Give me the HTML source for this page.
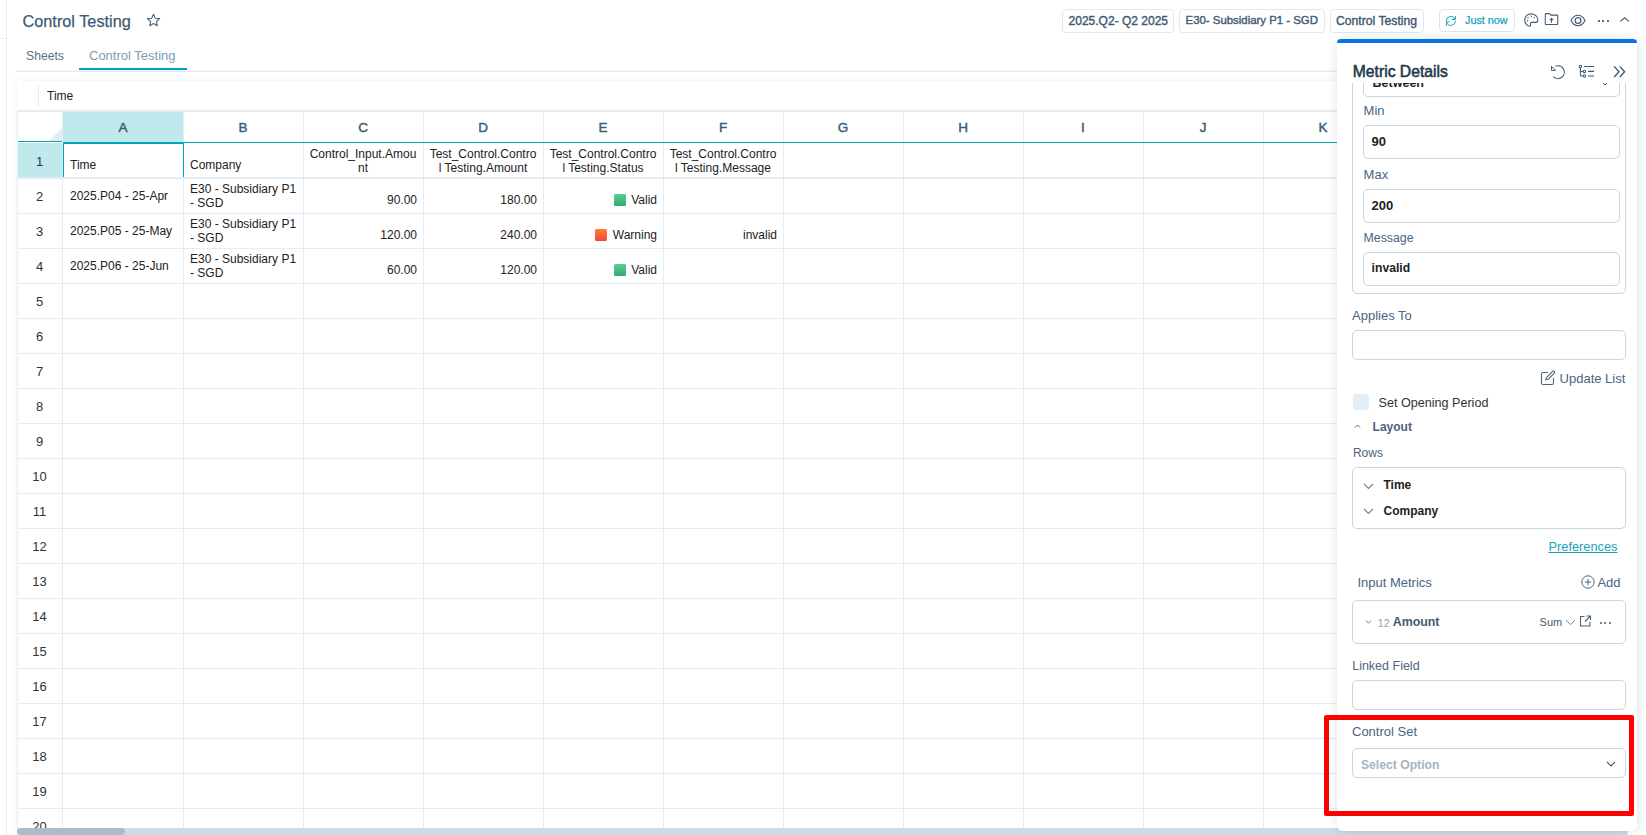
<!DOCTYPE html>
<html><head><meta charset="utf-8"><style>
html,body{margin:0;padding:0}
body{width:1646px;height:835px;overflow:hidden;position:relative;background:#fff;font-family:"Liberation Sans",sans-serif}
.t{position:absolute;line-height:1;white-space:nowrap}
.r{position:absolute}
</style></head><body>
<div class="r" style="left:6px;top:0px;width:1px;height:835px;background:#e6eef6"></div>
<div class="r" style="left:0px;top:38px;width:6px;height:1px;background:#e6eef6"></div>
<div class="t" style="left:22.5px;top:13.20px;font-size:16.3px;font-weight:400;color:#3f5b74;-webkit-text-stroke:0.25px #3f5b74">Control Testing</div>
<svg class="r" style="left:146px;top:13px" width="15" height="15" viewBox="0 0 15 15"><path d="M7.5 1.2 L9.3 5.2 L13.6 5.6 L10.4 8.5 L11.3 12.8 L7.5 10.6 L3.7 12.8 L4.6 8.5 L1.4 5.6 L5.7 5.2 Z" fill="none" stroke="#4a6580" stroke-width="1.1" stroke-linejoin="round"/></svg>
<div class="t" style="left:26px;top:49.67px;font-size:12.2px;font-weight:400;color:#58728a;">Sheets</div>
<div class="t" style="left:89px;top:49.00px;font-size:13px;font-weight:400;color:#7f9cb4;">Control Testing</div>
<div class="r" style="left:16px;top:70px;width:1330px;height:1px;background:#f1f5f9"></div>
<div class="r" style="left:16px;top:71px;width:1330px;height:1px;background:#e2ebf4"></div>
<div class="r" style="left:79px;top:68px;width:108px;height:2px;background:#00a6b8"></div>
<div class="r" style="left:17px;top:81px;width:1400px;height:760px;background:#fff;box-shadow:0 0 8px rgba(40,60,90,0.07)"></div>
<div class="r" style="left:38px;top:85px;width:1px;height:21px;background:#e4ebf2"></div>
<div class="t" style="left:47px;top:89.84px;font-size:12px;font-weight:400;color:#222;">Time</div>
<div class="r" style="left:17px;top:110px;width:1400px;height:2px;background:#e4edf4"></div>
<svg class="r" style="left:49px;top:128px" width="13" height="13"><path d="M13 0 L13 13 L0 13 Z" fill="#e4ebf2"/></svg>
<div class="r" style="left:17px;top:141px;width:45px;height:1px;background:#00a6b8"></div>
<div class="r" style="left:62px;top:112px;width:1px;height:723px;background:#e4edf4"></div>
<div class="r" style="left:63px;top:112px;width:120px;height:30px;background:#bfe9ed"></div>
<div class="t" style="left:23px;width:200px;text-align:center;top:120.57px;font-size:13.5px;font-weight:400;color:#3f5b74;-webkit-text-stroke:0.45px #3f5b74">A</div>
<div class="r" style="left:183px;top:112px;width:1px;height:723px;background:#e4edf4"></div>
<div class="t" style="left:143px;width:200px;text-align:center;top:120.57px;font-size:13.5px;font-weight:400;color:#3f5b74;-webkit-text-stroke:0.45px #3f5b74">B</div>
<div class="r" style="left:303px;top:112px;width:1px;height:723px;background:#e4edf4"></div>
<div class="t" style="left:263px;width:200px;text-align:center;top:120.57px;font-size:13.5px;font-weight:400;color:#3f5b74;-webkit-text-stroke:0.45px #3f5b74">C</div>
<div class="r" style="left:423px;top:112px;width:1px;height:723px;background:#e4edf4"></div>
<div class="t" style="left:383px;width:200px;text-align:center;top:120.57px;font-size:13.5px;font-weight:400;color:#3f5b74;-webkit-text-stroke:0.45px #3f5b74">D</div>
<div class="r" style="left:543px;top:112px;width:1px;height:723px;background:#e4edf4"></div>
<div class="t" style="left:503px;width:200px;text-align:center;top:120.57px;font-size:13.5px;font-weight:400;color:#3f5b74;-webkit-text-stroke:0.45px #3f5b74">E</div>
<div class="r" style="left:663px;top:112px;width:1px;height:723px;background:#e4edf4"></div>
<div class="t" style="left:623px;width:200px;text-align:center;top:120.57px;font-size:13.5px;font-weight:400;color:#3f5b74;-webkit-text-stroke:0.45px #3f5b74">F</div>
<div class="r" style="left:783px;top:112px;width:1px;height:723px;background:#e4edf4"></div>
<div class="t" style="left:743px;width:200px;text-align:center;top:120.57px;font-size:13.5px;font-weight:400;color:#3f5b74;-webkit-text-stroke:0.45px #3f5b74">G</div>
<div class="r" style="left:903px;top:112px;width:1px;height:723px;background:#e4edf4"></div>
<div class="t" style="left:863px;width:200px;text-align:center;top:120.57px;font-size:13.5px;font-weight:400;color:#3f5b74;-webkit-text-stroke:0.45px #3f5b74">H</div>
<div class="r" style="left:1023px;top:112px;width:1px;height:723px;background:#e4edf4"></div>
<div class="t" style="left:983px;width:200px;text-align:center;top:120.57px;font-size:13.5px;font-weight:400;color:#3f5b74;-webkit-text-stroke:0.45px #3f5b74">I</div>
<div class="r" style="left:1143px;top:112px;width:1px;height:723px;background:#e4edf4"></div>
<div class="t" style="left:1103px;width:200px;text-align:center;top:120.57px;font-size:13.5px;font-weight:400;color:#3f5b74;-webkit-text-stroke:0.45px #3f5b74">J</div>
<div class="r" style="left:1263px;top:112px;width:1px;height:723px;background:#e4edf4"></div>
<div class="t" style="left:1223px;width:200px;text-align:center;top:120.57px;font-size:13.5px;font-weight:400;color:#3f5b74;-webkit-text-stroke:0.45px #3f5b74">K</div>
<div class="r" style="left:63px;top:142px;width:1400px;height:1px;background:#00a6b8"></div>
<div class="r" style="left:18px;top:143px;width:44px;height:34px;background:#bfe9ed"></div>
<div class="r" style="left:17px;top:112px;width:1px;height:723px;background:#e4edf4"></div>
<div class="r" style="left:17px;top:177px;width:1400px;height:2px;background:#e4edf4"></div>
<div class="t" style="left:-60.5px;width:200px;text-align:center;top:155.00px;font-size:13px;font-weight:400;color:#333;">1</div>
<div class="r" style="left:17px;top:213px;width:1400px;height:1px;background:#e4edf4"></div>
<div class="t" style="left:-60.5px;width:200px;text-align:center;top:189.50px;font-size:13px;font-weight:400;color:#333;">2</div>
<div class="r" style="left:17px;top:248px;width:1400px;height:1px;background:#e4edf4"></div>
<div class="t" style="left:-60.5px;width:200px;text-align:center;top:224.50px;font-size:13px;font-weight:400;color:#333;">3</div>
<div class="r" style="left:17px;top:283px;width:1400px;height:1px;background:#e4edf4"></div>
<div class="t" style="left:-60.5px;width:200px;text-align:center;top:259.50px;font-size:13px;font-weight:400;color:#333;">4</div>
<div class="r" style="left:17px;top:318px;width:1400px;height:1px;background:#e4edf4"></div>
<div class="t" style="left:-60.5px;width:200px;text-align:center;top:294.50px;font-size:13px;font-weight:400;color:#333;">5</div>
<div class="r" style="left:17px;top:353px;width:1400px;height:1px;background:#e4edf4"></div>
<div class="t" style="left:-60.5px;width:200px;text-align:center;top:329.50px;font-size:13px;font-weight:400;color:#333;">6</div>
<div class="r" style="left:17px;top:388px;width:1400px;height:1px;background:#e4edf4"></div>
<div class="t" style="left:-60.5px;width:200px;text-align:center;top:364.50px;font-size:13px;font-weight:400;color:#333;">7</div>
<div class="r" style="left:17px;top:423px;width:1400px;height:1px;background:#e4edf4"></div>
<div class="t" style="left:-60.5px;width:200px;text-align:center;top:399.50px;font-size:13px;font-weight:400;color:#333;">8</div>
<div class="r" style="left:17px;top:458px;width:1400px;height:1px;background:#e4edf4"></div>
<div class="t" style="left:-60.5px;width:200px;text-align:center;top:434.50px;font-size:13px;font-weight:400;color:#333;">9</div>
<div class="r" style="left:17px;top:493px;width:1400px;height:1px;background:#e4edf4"></div>
<div class="t" style="left:-60.5px;width:200px;text-align:center;top:469.50px;font-size:13px;font-weight:400;color:#333;">10</div>
<div class="r" style="left:17px;top:528px;width:1400px;height:1px;background:#e4edf4"></div>
<div class="t" style="left:-60.5px;width:200px;text-align:center;top:504.50px;font-size:13px;font-weight:400;color:#333;">11</div>
<div class="r" style="left:17px;top:563px;width:1400px;height:1px;background:#e4edf4"></div>
<div class="t" style="left:-60.5px;width:200px;text-align:center;top:539.50px;font-size:13px;font-weight:400;color:#333;">12</div>
<div class="r" style="left:17px;top:598px;width:1400px;height:1px;background:#e4edf4"></div>
<div class="t" style="left:-60.5px;width:200px;text-align:center;top:574.50px;font-size:13px;font-weight:400;color:#333;">13</div>
<div class="r" style="left:17px;top:633px;width:1400px;height:1px;background:#e4edf4"></div>
<div class="t" style="left:-60.5px;width:200px;text-align:center;top:609.50px;font-size:13px;font-weight:400;color:#333;">14</div>
<div class="r" style="left:17px;top:668px;width:1400px;height:1px;background:#e4edf4"></div>
<div class="t" style="left:-60.5px;width:200px;text-align:center;top:644.50px;font-size:13px;font-weight:400;color:#333;">15</div>
<div class="r" style="left:17px;top:703px;width:1400px;height:1px;background:#e4edf4"></div>
<div class="t" style="left:-60.5px;width:200px;text-align:center;top:679.50px;font-size:13px;font-weight:400;color:#333;">16</div>
<div class="r" style="left:17px;top:738px;width:1400px;height:1px;background:#e4edf4"></div>
<div class="t" style="left:-60.5px;width:200px;text-align:center;top:714.50px;font-size:13px;font-weight:400;color:#333;">17</div>
<div class="r" style="left:17px;top:773px;width:1400px;height:1px;background:#e4edf4"></div>
<div class="t" style="left:-60.5px;width:200px;text-align:center;top:749.50px;font-size:13px;font-weight:400;color:#333;">18</div>
<div class="r" style="left:17px;top:808px;width:1400px;height:1px;background:#e4edf4"></div>
<div class="t" style="left:-60.5px;width:200px;text-align:center;top:784.50px;font-size:13px;font-weight:400;color:#333;">19</div>
<div class="r" style="left:17px;top:843px;width:1400px;height:1px;background:#e4edf4"></div>
<div class="t" style="left:-60.5px;width:200px;text-align:center;top:819.50px;font-size:13px;font-weight:400;color:#333;">20</div>
<div class="r" style="left:63px;top:142px;width:121px;height:2px;background:#00a6b8"></div>
<div class="r" style="left:63px;top:142px;width:1px;height:35px;background:#00a6b8"></div>
<div class="r" style="left:183px;top:142px;width:1px;height:35px;background:#00a6b8"></div>
<div class="t" style="left:70px;top:158.54px;font-size:12px;font-weight:400;color:#222;">Time</div>
<div class="t" style="left:190px;top:158.54px;font-size:12px;font-weight:400;color:#222;">Company</div>
<div class="t" style="left:263px;width:200px;text-align:center;top:148.04px;font-size:12px;font-weight:400;color:#222;">Control_Input.Amou</div>
<div class="t" style="left:263px;width:200px;text-align:center;top:162.04px;font-size:12px;font-weight:400;color:#222;">nt</div>
<div class="t" style="left:383px;width:200px;text-align:center;top:148.04px;font-size:12px;font-weight:400;color:#222;">Test_Control.Contro</div>
<div class="t" style="left:383px;width:200px;text-align:center;top:162.04px;font-size:12px;font-weight:400;color:#222;">l Testing.Amount</div>
<div class="t" style="left:503px;width:200px;text-align:center;top:148.04px;font-size:12px;font-weight:400;color:#222;">Test_Control.Contro</div>
<div class="t" style="left:503px;width:200px;text-align:center;top:162.04px;font-size:12px;font-weight:400;color:#222;">l Testing.Status</div>
<div class="t" style="left:623px;width:200px;text-align:center;top:148.04px;font-size:12px;font-weight:400;color:#222;">Test_Control.Contro</div>
<div class="t" style="left:623px;width:200px;text-align:center;top:162.04px;font-size:12px;font-weight:400;color:#222;">l Testing.Message</div>
<div class="t" style="left:70px;top:189.74px;font-size:12px;font-weight:400;color:#222;">2025.P04 - 25-Apr</div>
<div class="t" style="left:190px;top:182.94px;font-size:12px;font-weight:400;color:#222;">E30 - Subsidiary P1</div>
<div class="t" style="left:190px;top:196.94px;font-size:12px;font-weight:400;color:#222;">- SGD</div>
<div class="t" style="right:1229px;top:193.84px;font-size:12px;font-weight:400;color:#222;">90.00</div>
<div class="t" style="right:1109px;top:193.84px;font-size:12px;font-weight:400;color:#222;">180.00</div>
<div class="t" style="right:989px;top:193.84px;font-size:12px;font-weight:400;color:#222;">Valid</div>
<div class="r" style="left:614px;top:194px;width:12px;height:12px;background:linear-gradient(#52d192,#38a673);border-radius:1.5px"></div>
<div class="t" style="left:70px;top:224.74px;font-size:12px;font-weight:400;color:#222;">2025.P05 - 25-May</div>
<div class="t" style="left:190px;top:217.94px;font-size:12px;font-weight:400;color:#222;">E30 - Subsidiary P1</div>
<div class="t" style="left:190px;top:231.94px;font-size:12px;font-weight:400;color:#222;">- SGD</div>
<div class="t" style="right:1229px;top:228.84px;font-size:12px;font-weight:400;color:#222;">120.00</div>
<div class="t" style="right:1109px;top:228.84px;font-size:12px;font-weight:400;color:#222;">240.00</div>
<div class="t" style="right:989px;top:228.84px;font-size:12px;font-weight:400;color:#222;">Warning</div>
<div class="r" style="left:595px;top:229px;width:12px;height:12px;background:linear-gradient(#ff7d33,#ee4a3c);border-radius:1.5px"></div>
<div class="t" style="right:869px;top:228.84px;font-size:12px;font-weight:400;color:#222;">invalid</div>
<div class="t" style="left:70px;top:259.74px;font-size:12px;font-weight:400;color:#222;">2025.P06 - 25-Jun</div>
<div class="t" style="left:190px;top:252.94px;font-size:12px;font-weight:400;color:#222;">E30 - Subsidiary P1</div>
<div class="t" style="left:190px;top:266.94px;font-size:12px;font-weight:400;color:#222;">- SGD</div>
<div class="t" style="right:1229px;top:263.84px;font-size:12px;font-weight:400;color:#222;">60.00</div>
<div class="t" style="right:1109px;top:263.84px;font-size:12px;font-weight:400;color:#222;">120.00</div>
<div class="t" style="right:989px;top:263.84px;font-size:12px;font-weight:400;color:#222;">Valid</div>
<div class="r" style="left:614px;top:264px;width:12px;height:12px;background:linear-gradient(#52d192,#38a673);border-radius:1.5px"></div>
<div class="r" style="left:17px;top:828px;width:1611px;height:7px;background:#c9dce7;border-radius:4px"></div>
<div class="r" style="left:17px;top:828px;width:108px;height:7px;background:#a9bccb;border-radius:4px"></div>
<div class="r" style="left:1062px;top:9px;width:110px;height:22px;border:1px solid #dfe8f0;border-radius:4px;background:#fff"></div>
<div class="t" style="left:1068.6px;top:14.84px;font-size:12px;font-weight:400;color:#3f5b74;-webkit-text-stroke:0.4px #3f5b74">2025.Q2- Q2 2025</div>
<div class="r" style="left:1179px;top:9px;width:144px;height:22px;border:1px solid #dfe8f0;border-radius:4px;background:#fff"></div>
<div class="t" style="left:1185.6px;top:15.35px;font-size:11.4px;font-weight:400;color:#3f5b74;-webkit-text-stroke:0.4px #3f5b74">E30- Subsidiary P1 - SGD</div>
<div class="r" style="left:1330px;top:9px;width:92px;height:22px;border:1px solid #dfe8f0;border-radius:4px;background:#fff"></div>
<div class="t" style="left:1336px;top:14.67px;font-size:12.2px;font-weight:400;color:#3f5b74;-webkit-text-stroke:0.4px #3f5b74">Control Testing</div>
<div class="r" style="left:1439px;top:9px;width:74px;height:21px;border:1px solid #d9e5ec;border-radius:4px;background:#fff"></div>
<div class="t" style="left:1465px;top:15.36px;font-size:10.8px;font-weight:400;color:#14a7bb;-webkit-text-stroke:0.25px #14a7bb">Just now</div>
<svg class="r" style="left:1445px;top:15px" width="12" height="12" viewBox="0 0 12 12"><g fill="none" stroke="#14a7bb" stroke-width="1"><path d="M1.2 6.2 A4.6 4.6 0 0 1 10 4.2"/><path d="M10.4 1.1 L10.4 4.5 L6.8 4.5"/><path d="M10.5 5.9 A4.6 4.6 0 0 1 1.6 7.4"/><path d="M1.4 10.9 L1.4 6.8 L4.7 6.8"/></g></svg>
<svg class="r" style="left:1524px;top:13px" width="15" height="14" viewBox="0 0 15 14"><path d="M7 0.8 C3.4 0.8 0.7 3.5 0.7 6.9 C0.7 10.4 3.4 13.2 5.8 13.2 C6.9 13.2 6.8 12.2 6.5 11.4 C6.1 10.2 6.6 9.4 8 9.4 L11.6 9.4 C13.2 9.4 13.9 8.6 13.9 7.1 C13.9 3.6 10.8 0.8 7 0.8 Z" fill="none" stroke="#3f5b74" stroke-width="1.1"/><circle cx="4" cy="4.8" r="0.7" fill="#3f5b74"/><circle cx="7.2" cy="3.2" r="0.7" fill="#3f5b74"/><circle cx="10.2" cy="4.6" r="0.7" fill="#3f5b74"/><circle cx="3.6" cy="7.8" r="0.7" fill="#3f5b74"/></svg>
<svg class="r" style="left:1544px;top:12px" width="15" height="14" viewBox="0 0 15 14"><path d="M1.6 1.6 L5.5 1.6 L6.9 3.1 L13.1 3.1 Q13.7 3.1 13.7 3.7 L13.7 11.9 Q13.7 12.5 13.1 12.5 L1.9 12.5 Q1.3 12.5 1.3 11.9 L1.3 2 Z" fill="none" stroke="#3f5b74" stroke-width="1.05" stroke-linejoin="round"/><path d="M7.5 10.8 L7.5 6.5 M5.8 8.2 L7.5 6.5 L9.2 8.2" fill="none" stroke="#3f5b74" stroke-width="1.05"/></svg>
<svg class="r" style="left:1570px;top:13.5px" width="16" height="13" viewBox="0 0 16 13"><path d="M1 6.5 C3 2.6 5.4 1.3 8 1.3 C10.6 1.3 13 2.6 15 6.5 C13 10.4 10.6 11.7 8 11.7 C5.4 11.7 3 10.4 1 6.5 Z" fill="none" stroke="#3f5b74" stroke-width="1.1"/><circle cx="8" cy="6.5" r="2.9" fill="none" stroke="#3f5b74" stroke-width="1.2"/></svg>
<div class="r" style="left:1597.5px;top:20px;width:2px;height:2px;background:#333b44;border-radius:50%"></div>
<div class="r" style="left:1602px;top:20px;width:2px;height:2px;background:#333b44;border-radius:50%"></div>
<div class="r" style="left:1606.5px;top:20px;width:2px;height:2px;background:#333b44;border-radius:50%"></div>
<svg class="r" style="left:1619px;top:16px" width="12" height="8" viewBox="0 0 12 8"><path d="M1.3 5.4 L5.6 1.8 L9.9 5.4" fill="none" stroke="#3f5b74" stroke-width="1.1"/></svg>
<div class="r" style="left:1337px;top:39px;width:300px;height:792px;background:#fff;border-radius:6px;box-shadow:2px 0 9px rgba(20,40,70,0.09),-2px 0 12px rgba(30,50,80,0.06)"></div>
<div class="r" style="left:1337px;top:39px;width:300px;height:8px;background:#0a72e0;border-radius:4px 4px 0 0"></div>
<div class="r" style="left:1337px;top:43px;width:300px;height:4px;background:#fff"></div>
<div class="r" style="left:1337px;top:83px;width:300px;height:748px;overflow:hidden">
<div class="r" style="left:15px;top:-43px;width:272px;height:252px;border:1px solid #c9d6e1;border-radius:5px"></div>
<div class="r" style="left:26px;top:-43px;width:255px;height:55px;border:1px solid #c9d6e1;border-radius:5px"></div>
<div class="t" style="left:35.59999999999991px;top:-5.58px;font-size:12.5px;font-weight:700;color:#222;">Between</div>
<svg class="r" style="left:264px;top:-2px" width="8" height="5" viewBox="0 0 8 5"><path d="M1 1 L4 4 L7 1" fill="none" stroke="#555" stroke-width="1"/></svg>
<div class="t" style="left:26.59999999999991px;top:21.00px;font-size:13px;font-weight:400;color:#4a6580;">Min</div>
<div class="r" style="left:26px;top:42px;width:255px;height:32px;border:1px solid #c9d6e1;border-radius:5px"></div>
<div class="t" style="left:34.59999999999991px;top:52.00px;font-size:13px;font-weight:700;color:#222;">90</div>
<div class="t" style="left:26.59999999999991px;top:85.00px;font-size:13px;font-weight:400;color:#4a6580;">Max</div>
<div class="r" style="left:26px;top:106px;width:255px;height:32px;border:1px solid #c9d6e1;border-radius:5px"></div>
<div class="t" style="left:34.59999999999991px;top:116.00px;font-size:13px;font-weight:700;color:#222;">200</div>
<div class="t" style="left:26.59999999999991px;top:148.59px;font-size:12.3px;font-weight:400;color:#4a6580;">Message</div>
<div class="r" style="left:26px;top:169px;width:255px;height:32px;border:1px solid #c9d6e1;border-radius:5px"></div>
<div class="t" style="left:34.59999999999991px;top:179.37px;font-size:12.2px;font-weight:700;color:#222;">invalid</div>
<div class="t" style="left:15px;top:226.00px;font-size:13px;font-weight:400;color:#4a6580;">Applies To</div>
<div class="r" style="left:15px;top:247px;width:272px;height:28px;border:1px solid #c9d6e1;border-radius:5px"></div>
<svg class="r" style="left:203px;top:287px" width="16" height="16" viewBox="0 0 16 16"><path d="M8 2.5 L3 2.5 Q1.5 2.5 1.5 4 L1.5 13 Q1.5 14.5 3 14.5 L12 14.5 Q13.5 14.5 13.5 13 L13.5 8" fill="none" stroke="#4a6580" stroke-width="1.1"/><path d="M12.6 1.4 Q13.4 0.6 14.3 1.5 Q15.1 2.4 14.3 3.2 L8.2 9.3 L5.8 9.9 L6.4 7.6 Z" fill="none" stroke="#4a6580" stroke-width="1.1" stroke-linejoin="round"/></svg>
<div class="t" style="right:11.700000000000045px;top:288.60px;font-size:13px;font-weight:400;color:#4a6580;">Update List</div>
<div class="r" style="left:16px;top:311px;width:16px;height:16px;background:#e3eef7;border-radius:3px"></div>
<div class="t" style="left:41.5px;top:313.93px;font-size:12.6px;font-weight:400;color:#333;">Set Opening Period</div>
<svg class="r" style="left:16px;top:340px" width="9" height="6" viewBox="0 0 9 6"><path d="M2 4.5 L4.5 2 L7 4.5" fill="none" stroke="#4a6580" stroke-width="1"/></svg>
<div class="t" style="left:35.59999999999991px;top:337.54px;font-size:12px;font-weight:700;color:#4a6580;">Layout</div>
<div class="t" style="left:15.900000000000091px;top:363.84px;font-size:12px;font-weight:400;color:#4a6580;">Rows</div>
<div class="r" style="left:15px;top:384px;width:272px;height:60px;border:1px solid #c9d6e1;border-radius:5px"></div>
<svg class="r" style="left:26px;top:399.6px" width="12" height="7" viewBox="0 0 12 7"><path d="M1 1 L5.5 5.5 L10 1" fill="none" stroke="#6b8399" stroke-width="1.1"/></svg>
<div class="t" style="left:46.5px;top:396.44px;font-size:12px;font-weight:700;color:#222;">Time</div>
<svg class="r" style="left:26px;top:424.70000000000005px" width="12" height="7" viewBox="0 0 12 7"><path d="M1 1 L5.5 5.5 L10 1" fill="none" stroke="#6b8399" stroke-width="1.1"/></svg>
<div class="t" style="left:46.5px;top:421.54px;font-size:12px;font-weight:700;color:#222;">Company</div>
<div class="t" style="right:19.5px;top:457.66px;font-size:12.8px;font-weight:400;color:#1aa3b9;text-decoration:underline;text-underline-offset:1px">Preferences</div>
<div class="t" style="left:20.40000000000009px;top:493.40px;font-size:13px;font-weight:400;color:#4a6580;">Input Metrics</div>
<svg class="r" style="left:244px;top:492px" width="14" height="14" viewBox="0 0 14 14"><circle cx="7" cy="7" r="6.2" fill="none" stroke="#4a6580" stroke-width="1"/><path d="M7 3.8 L7 10.2 M3.8 7 L10.2 7" stroke="#4a6580" stroke-width="1"/></svg>
<div class="t" style="left:260.4000000000001px;top:493.40px;font-size:13px;font-weight:400;color:#4a6580;">Add</div>
<div class="r" style="left:15px;top:517px;width:272px;height:42px;border:1px solid #c9d6e1;border-radius:5px"></div>
<svg class="r" style="left:28px;top:536px" width="7" height="6" viewBox="0 0 7 6"><path d="M1 1.5 L3.5 4.2 L6 1.5" fill="none" stroke="#6b8399" stroke-width="1"/></svg>
<div class="t" style="left:40.799999999999955px;top:534.71px;font-size:10.5px;font-weight:400;color:#8fa3b4;">12</div>
<div class="t" style="left:55.700000000000045px;top:532.50px;font-size:12.4px;font-weight:700;color:#3f5b74;">Amount</div>
<div class="t" style="left:202.5999999999999px;top:533.69px;font-size:11px;font-weight:400;color:#3f5b74;">Sum</div>
<svg class="r" style="left:228px;top:536px" width="11" height="7" viewBox="0 0 11 7"><path d="M1 1.2 L5.5 5.6 L10 1.2" fill="none" stroke="#6b8399" stroke-width="1"/></svg>
<svg class="r" style="left:242px;top:532px" width="13" height="12" viewBox="0 0 13 12"><path d="M5.5 1.5 L1.5 1.5 L1.5 11 L11 11 L11 7" fill="none" stroke="#4a6580" stroke-width="1.1"/><path d="M7.5 1 L11.5 1 L11.5 5 M11.5 1 L6 6.5" fill="none" stroke="#4a6580" stroke-width="1.1"/></svg>
<div class="r" style="left:262.5px;top:539px;width:2px;height:2px;background:#3f5b74;border-radius:1px"></div>
<div class="r" style="left:267px;top:539px;width:2px;height:2px;background:#3f5b74;border-radius:1px"></div>
<div class="r" style="left:271.5px;top:539px;width:2px;height:2px;background:#3f5b74;border-radius:1px"></div>
<div class="t" style="left:15.200000000000045px;top:576.82px;font-size:12.5px;font-weight:400;color:#4a6580;">Linked Field</div>
<div class="r" style="left:15px;top:597px;width:272px;height:28px;border:1px solid #c9d6e1;border-radius:5px"></div>
<div class="t" style="left:15px;top:642.00px;font-size:13px;font-weight:400;color:#4a6580;">Control Set</div>
<div class="r" style="left:15px;top:665px;width:272px;height:28px;border:1px solid #c9d6e1;border-radius:5px"></div>
<div class="t" style="left:23.90000000000009px;top:675.87px;font-size:12.2px;font-weight:700;color:#a9b4bd;">Select Option</div>
<svg class="r" style="left:269px;top:678px" width="10" height="6" viewBox="0 0 10 6"><path d="M1 1 L5 5 L9 1" fill="none" stroke="#3f5b74" stroke-width="1.1"/></svg>
</div>
<div class="t" style="left:1352.8px;top:63.71px;font-size:15.7px;font-weight:400;color:#24394d;-webkit-text-stroke:0.55px #24394d">Metric Details</div>
<svg class="r" style="left:1549px;top:63.6px" width="17" height="17" viewBox="0 0 17 17"><path d="M6.4 2.3 A6.4 6.4 0 1 1 4.3 12.6" fill="none" stroke="#3f5b74" stroke-width="1.1"/><path d="M2.5 2.2 L2.5 6.4 L6.6 6.4 M2.6 2.4 L6.4 6.2" fill="none" stroke="#3f5b74" stroke-width="1"/></svg>
<svg class="r" style="left:1578px;top:64px" width="17" height="15" viewBox="0 0 17 15"><g fill="none" stroke="#3f5b74" stroke-width="1.05"><circle cx="2.4" cy="2.5" r="1.2"/><path d="M2.4 3.7 L2.4 11 Q2.4 12 3.4 12 L5.2 12 M2.4 7.4 L5.2 7.4"/><circle cx="6.4" cy="7.4" r="1.2"/><circle cx="6.4" cy="12" r="1.2"/><path d="M6.1 2.5 L16.1 2.5 M9.9 7.4 L16.1 7.4 M9.9 12 L16.1 12" stroke-width="1.1"/></g></svg>
<svg class="r" style="left:1613px;top:65px" width="14" height="14" viewBox="0 0 14 14"><path d="M1.2 1.4 L6 6.7 L1.2 12 M6.8 1.4 L11.6 6.7 L6.8 12" fill="none" stroke="#3f5b74" stroke-width="1.4"/></svg>
<div class="r" style="left:1324px;top:715px;width:300px;height:91px;border:5px solid #ff0000;border-radius:2px"></div>
</body></html>
